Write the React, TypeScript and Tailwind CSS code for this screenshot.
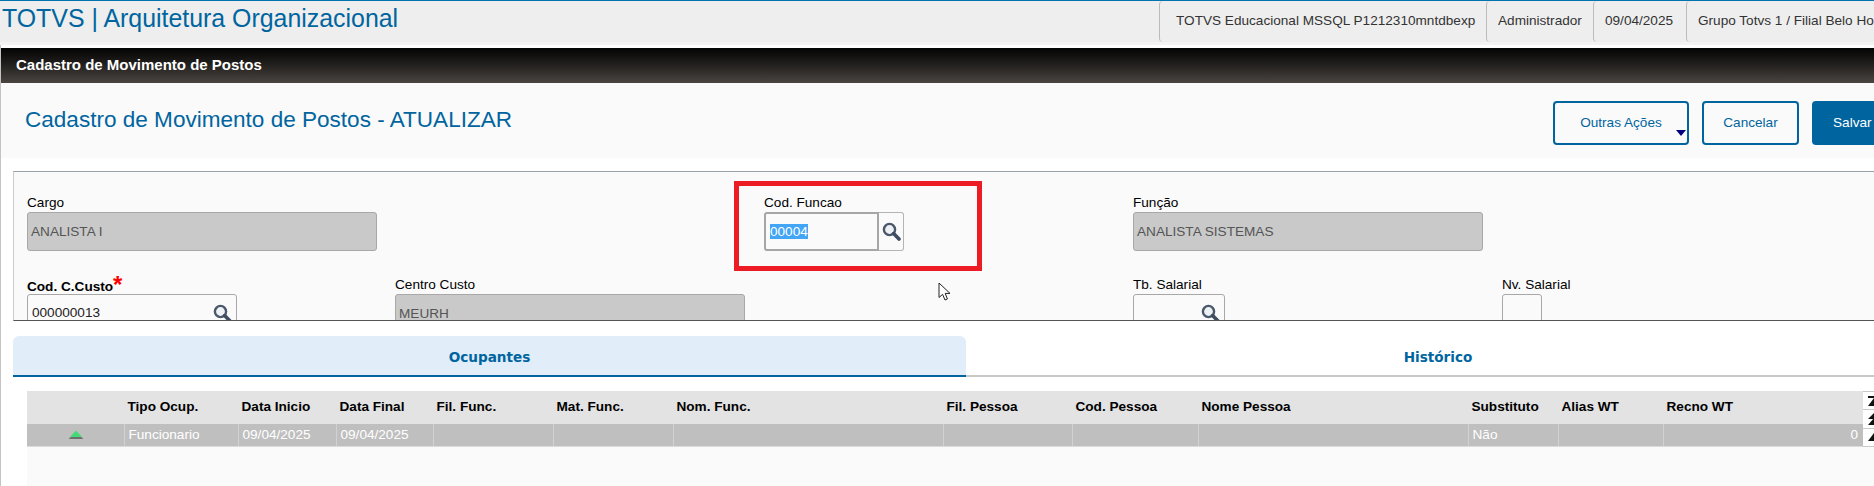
import React from 'react';

const SearchIcon = () => (
  <svg width="19" height="19" viewBox="0 0 19 19" fill="none">
    <circle cx="7.5" cy="7.5" r="5.6" stroke="#4a586c" strokeWidth="2.4" fill="#eef1f4" />
    <path d="M11.6 11.6L17 17" stroke="#3f4d60" strokeWidth="3.6" strokeLinecap="round" />
  </svg>
);

const ReadOnlyField = ({ label, value, width }: { label: string; value: string; width: string }) => (
  <div>
    <div className="h-[20px] text-[13.6px] leading-[22px] text-black">{label}</div>
    <div className={`${width} h-[39px] rounded-[3px] border border-[#a8a8a8] bg-[#c9c9c9] pl-[3px] text-[13.6px] leading-[37px] text-[#555]`}>
      {value}
    </div>
  </div>
);

const LookupField = ({ value, width }: { value: string; width: string }) => (
  <div className={`${width} flex h-[39px] items-center justify-between rounded-[3px] border border-[#a8a8a8] pl-[4px] pr-[4px] text-[13.6px] text-[#222]`}>
    <span>{value}</span>
    <SearchIcon />
  </div>
);

const colGrid = 'grid grid-cols-[97px_114px_98px_97px_120px_120px_270px_129px_126px_270px_90px_105px_200px]';
const headers = ['', 'Tipo Ocup.', 'Data Inicio', 'Data Final', 'Fil. Func.', 'Mat. Func.', 'Nom. Func.', 'Fil. Pessoa', 'Cod. Pessoa', 'Nome Pessoa', 'Substituto', 'Alias WT', 'Recno WT'];
const row = ['Funcionario', '09/04/2025', '09/04/2025', '', '', '', '', '', '', 'Não', ''];

const App: React.FC = () => {
  return (
    <div className="relative h-[486px] w-[1874px] overflow-hidden bg-white font-['Liberation_Sans',Arial,sans-serif]">
      {/* barra do topo */}
      <div className="flex h-[42px] items-stretch justify-between whitespace-nowrap border-t border-[#0073b0] bg-[#eeeeee]">
        <div className="pl-[2px] text-[24.9px] leading-[35px] text-[#00659f]">TOTVS | Arquitetura Organizacional</div>
        <div className="flex w-[715px] text-[13.6px] leading-[40px] text-[#333]">
          <div className="w-[327px] shrink-0 rounded-l-[4px] border-l border-[#bbb] pl-[16px]">TOTVS Educacional MSSQL P1212310mntdbexp</div>
          <div className="w-[107px] shrink-0 rounded-l-[4px] border-l border-[#bbb] pl-[11px]">Administrador</div>
          <div className="w-[93px] shrink-0 rounded-l-[4px] border-l border-[#bbb] pl-[11px]">09/04/2025</div>
          <div className="w-[188px] shrink-0 overflow-hidden rounded-l-[4px] border-l border-[#bbb] pl-[11px]">Grupo Totvs 1 / Filial Belo Horizonte</div>
        </div>
      </div>
      <div className="h-[3px] bg-[#f3f3f3]" />

      <div className="border-l border-[#c4c4c4]">
        <div className="h-[3px] bg-white" />
        <div className="flex h-[35px] items-center bg-gradient-to-b from-[#050505] to-[#4a4540] pl-[15px] text-[15px] font-bold text-white">
          Cadastro de Movimento de Postos
        </div>

        <div className="flex h-[75px] justify-between bg-[#fafafa] pl-[24px]">
          <div className="pt-[24px] text-[22.55px] leading-[26px] text-[#00659f]">Cadastro de Movimento de Postos - ATUALIZAR</div>
          <div className="flex w-[321px] shrink-0 gap-[13px] pt-[18px] text-[13.6px]">
            <div className="relative h-[44px] w-[136px] shrink-0 rounded-[4px] border-2 border-[#00659f] text-center leading-[40px] text-[#00659f]">
              Outras Ações
              <span className="absolute bottom-[7px] right-[1px] h-0 w-0 border-x-[5px] border-t-[6px] border-x-transparent border-t-[#000080]" />
            </div>
            <div className="h-[44px] w-[97px] shrink-0 rounded-[4px] border-2 border-[#00659f] text-center leading-[40px] text-[#00659f]">Cancelar</div>
            <div className="h-[44px] w-[81px] shrink-0 rounded-l-[4px] bg-[#00659f] pl-[21px] leading-[44px] text-white">Salvar</div>
          </div>
        </div>

        {/* formulario */}
        <div className="ml-[12px] mt-[13px] h-[150px] overflow-hidden border-b border-l border-t border-b-[#555] border-l-[#ccc] border-t-[#9aa0a6] bg-[#fafafa] pl-[13px] pt-[20px]">
          <div className="grid grid-cols-[368px_369px_369px_369px_369px]">
            <ReadOnlyField label="Cargo" value="ANALISTA I" width="w-[350px]" />
            <div />
            <div>
              <div className="h-[20px] text-[13.6px] leading-[22px] text-black">Cod. Funcao</div>
              <div className="flex h-[39px] w-[140px]">
                <div className="flex w-[115px] items-center rounded-l-[3px] border-[2px] border-[#a6a6a6] pl-[4px] text-[13.6px]">
                  <span className="bg-[#42a5f5] leading-[15px] text-white">00004</span>
                </div>
                <div className="flex flex-1 items-center justify-center rounded-r-[3px] border-y border-r border-[#b4b4b4]">
                  <SearchIcon />
                </div>
              </div>
            </div>
            <ReadOnlyField label="Função" value="ANALISTA SISTEMAS" width="w-[350px]" />
            <div />
          </div>

          <div className="mt-[23px] grid grid-cols-[368px_369px_369px_369px_369px]">
            <div>
              <div className="h-[20px] text-[13.6px] font-bold leading-[26px] text-black">
                Cod. C.Custo<span className="relative top-[2px] text-[24px] leading-[10px] text-[#ff0000]">*</span>
              </div>
              <LookupField value="000000013" width="w-[210px]" />
            </div>
            <ReadOnlyField label="Centro Custo" value="MEURH" width="w-[350px]" />
            <div />
            <div>
              <div className="h-[20px] text-[13.6px] leading-[22px] text-black">Tb. Salarial</div>
              <LookupField value="" width="w-[92px]" />
            </div>
            <div>
              <div className="h-[20px] text-[13.6px] leading-[22px] text-black">Nv. Salarial</div>
              <div className="h-[39px] w-[40px] rounded-[3px] border border-[#a8a8a8]" />
            </div>
          </div>
        </div>

        {/* abas */}
        <div className="ml-[12px] mt-[15px] flex w-[1906px] text-[13.6px] font-bold text-[#00659f] [font-family:'DejaVu_Sans',sans-serif]">
          <div className="h-[41px] w-[953px] shrink-0 rounded-t-[6px] border-b-2 border-[#00659f] bg-[#e1edf9] text-center leading-[42px]">Ocupantes</div>
          <div className="h-[41px] w-[944px] shrink-0 border-b-2 border-[#c8c8c8] text-center leading-[42px]">Histórico</div>
        </div>

        {/* tabela */}
        <div className="ml-[26px] mt-[14px] flex">
          <div className="w-[1836px] shrink-0">
            <div className={`${colGrid} h-[33px] items-center bg-[#e3e3e3] text-[13.6px] font-bold text-black`}>
              {headers.map((h, i) => (
                <div key={i} className="pl-[3.5px]">{h}</div>
              ))}
            </div>
            <div className={`${colGrid} h-[23px] border-b border-[#dcdcdc] bg-[#bfbfbf] text-[13.6px] leading-[21px] text-white`}>
              <div className="flex items-center justify-center">
                <svg width="16" height="10" viewBox="0 0 16 10">
                  <path d="M0.5 9 L8 2.5 L15.5 9 Z" fill="#6f6f6f" />
                  <path d="M2 7 L8 0.5 L14 7 Z" fill="#43d975" />
                </svg>
              </div>
              {row.map((c, i) => (
                <div key={i} className="border-l border-[#d2d2d2] pl-[3.5px]">{c}</div>
              ))}
              <div className="border-l border-[#d2d2d2] pr-[5px] text-right">0</div>
            </div>
            <div className="h-[60px] bg-[#fafafa]" />
          </div>
          <div className="w-[11px] shrink-0 overflow-hidden bg-[#fafafa]">
            <div className="flex h-[18px] items-start border-t border-[#c8c8c8] bg-white pl-[5px] pt-[4px]">
              <svg width="12" height="11" viewBox="0 0 12 11" className="shrink-0">
                <path d="M0 0H12V2H0Z M6 2L12 10H0Z" fill="#111" />
              </svg>
            </div>
            <div className="flex h-[19px] items-start border-t border-[#c8c8c8] bg-white pl-[5px] pt-[3px]">
              <svg width="12" height="13" viewBox="0 0 12 13" className="shrink-0">
                <path d="M6 0L12 6H0Z M6 5L12 12H0Z" fill="#111" />
              </svg>
            </div>
            <div className="flex h-[19px] items-start border-y border-[#c8c8c8] bg-white pl-[5px] pt-[4px]">
              <svg width="12" height="8" viewBox="0 0 12 8" className="shrink-0">
                <path d="M6 0L12 8H0Z" fill="#111" />
              </svg>
            </div>
          </div>
        </div>
      </div>

      {/* moldura vermelha e cursor sobre a tela */}
      <div className="absolute left-[734px] top-[181px] h-[90px] w-[248px] border-[5px] border-[#ed1c24]" />
      <svg className="absolute left-[938px] top-[282px]" width="14" height="20" viewBox="0 0 14 20">
        <path d="M1 1V15.5L4.6 12.3L7 18L9.4 17L7.2 11.4H12Z" fill="#fff" stroke="#222" strokeWidth="1" />
      </svg>
    </div>
  );
};

export default App;
